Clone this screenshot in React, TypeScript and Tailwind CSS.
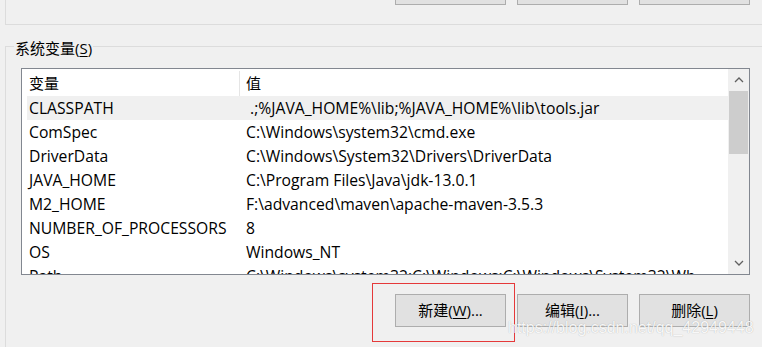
import React from 'react';

const rows: [string, string][] = [
  ['CLASSPATH', ' .;%JAVA_HOME%\\lib;%JAVA_HOME%\\lib\\tools.jar'],
  ['ComSpec', 'C:\\Windows\\system32\\cmd.exe'],
  ['DriverData', 'C:\\Windows\\System32\\Drivers\\DriverData'],
  ['JAVA_HOME', 'C:\\Program Files\\Java\\jdk-13.0.1'],
  ['M2_HOME', 'F:\\advanced\\maven\\apache-maven-3.5.3'],
  ['NUMBER_OF_PROCESSORS', '8'],
  ['OS', 'Windows_NT'],
  ['Path', 'C:\\Windows\\system32;C:\\Windows;C:\\Windows\\System32\\Wb'],
];

const WinButton: React.FC<{ label?: string; hot?: string; tail?: string }> = ({ label, hot, tail }) => (
  <button className="w-[111px] h-[33px] shrink-0 border border-[#adadad] bg-[#e1e1e1] text-[15px] text-black flex items-center justify-center">
    {label}
    {hot ? (
      <>
        (<span className="underline underline-offset-2">{hot}</span>)
      </>
    ) : null}
    {tail}
  </button>
);

const Chevron: React.FC<{ up?: boolean }> = ({ up }) => (
  <svg width="10" height="6" viewBox="0 0 10 6" className="block">
    <path d={up ? 'M1 5 L5 1 L9 5' : 'M1 1 L5 5 L9 1'} fill="none" stroke="#606060" strokeWidth="1.3" />
  </svg>
);

export default function App() {
  return (
    <div className="relative w-[762px] h-[347px] overflow-hidden bg-[#f0f0f0] text-black font-['Open_Sans','Noto_Sans_CJK_SC',sans-serif]">
      {/* user variables group, only its bottom edge shows */}
      <div className="ml-[5px] w-[800px] h-[25px] flex flex-col border-l border-b border-[#dcdcdc]">
        <div className="flex gap-[11px] pl-[389px] -mt-[28px]">
          <WinButton />
          <WinButton />
          <WinButton />
        </div>
      </div>

      {/* system variables */}
      <div className="ml-[5px] mt-[21px] w-[800px] h-[320px] border-l border-t border-[#dcdcdc]">
        <div className="-mt-[10px] ml-[8px] w-fit px-px bg-[#f0f0f0] text-[15px] leading-[22px]">
          系统变量(<span className="underline underline-offset-2">S</span>)
        </div>

        <div className="ml-[15px] mt-[9px] w-[729px] h-[207px] border border-[#828790] bg-white flex">
          <div className="flex-1 overflow-hidden text-[15.7px]">
            <div className="ml-[5px] h-[27px] pt-px flex items-center">
              <div className="w-[212px] pl-[2px] text-[15px]">变量</div>
              <div className="w-px h-[25px] bg-[#e5e5e5]" />
              <div className="pl-[6px] text-[15px]">值</div>
            </div>
            {rows.map(([name, value], i) => (
              <div key={name} className={`ml-[5px] h-[24px] pt-px flex items-center whitespace-pre ${i === 0 ? 'bg-[#f0f0f0]' : ''}`}>
                <div className="w-[217px] pl-[2px]">{name}</div>
                <div className="pl-[2px]">{value}</div>
              </div>
            ))}
          </div>
          <div className="w-[21px] bg-[#f0f0f0] flex flex-col">
            <div className="h-[22px] flex items-center justify-center">
              <Chevron up />
            </div>
            <div className="mx-px h-[63px] bg-[#cdcdcd]" />
            <div className="flex-1" />
            <div className="h-[22px] flex items-center justify-center">
              <Chevron />
            </div>
          </div>
        </div>

        <div className="mt-[19px] ml-[389px] flex gap-[11px]">
          <WinButton label="新建" hot="W" tail="..." />
          <WinButton label="编辑" hot="I" tail="..." />
          <WinButton label="删除" hot="L" />
        </div>
      </div>

      {/* annotation box and watermark lying over the screenshot */}
      <div className="absolute left-[372px] top-[283px] w-[143px] h-[59px] border border-[#e5393a]" />
      <div className="absolute left-[508px] top-[318px] text-[16px] leading-[20px] font-['Liberation_Sans',sans-serif] text-white/90 [text-shadow:0_0_1px_rgba(0,0,0,0.3)]">
        https://blog.csdn.net/qq_42949448
      </div>
    </div>
  );
}
